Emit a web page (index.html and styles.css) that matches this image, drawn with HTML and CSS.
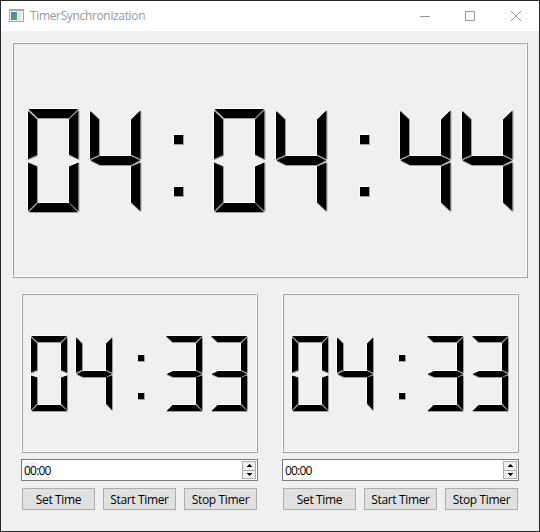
FILE: index.html
```html
<!DOCTYPE html>
<html lang="en">
<head>
<meta charset="utf-8">
<title>TimerSynchronization</title>
<link rel="stylesheet" href="styles.css">
</head>
<body>
<svg class="defs" width="0" height="0" aria-hidden="true">
  <defs>
    <path id="b0" d="M0.5 0H50L41 9H10ZM0 2L9 10.5V46L0 50ZM50.3 1.5V50L41 45.5V10.5ZM0 53.5L9 57.5V93.3L0 102ZM50.3 53.5V102L41 93.3V57.5ZM10 94H41L49.5 103H1Z"/>
    <path id="b4" d="M0 2L9 10.5V46L0 50ZM50.3 1.5V50L41 45.5V10.5ZM0.5 51.3L10 47H41L50 51.3L41 56H10ZM50.3 53.5V102L41 93.3V57.5Z"/>
    <path id="bc" d="M22 26H31V35H22ZM22 78H31V87H22Z"/>
    <path id="s0" d="M0 0H36L29.5 6H6.5ZM0 1.5L6 7.5V34L0 36.5ZM36 1.5V36.5L30 34V7.5ZM0 39.5L6 41.5V67.5L0 74ZM36 39.5V74L30 67.5V41.5ZM6.5 69H29.5L36 75H0.5Z"/>
    <path id="s4" d="M0 1.5L6 7.5V34L0 36.5ZM36 1.5V36.5L30 34V7.5ZM0.5 38L7 35H30L36 38L30 41H7ZM36 39.5V74L30 67.5V41.5Z"/>
    <path id="s3" d="M0 0H36L29.5 6H6.5ZM36 1.5V36.5L30 34V7.5ZM0.5 38L7 35H30L36 38L30 41H7ZM36 39.5V74L30 67.5V41.5ZM6.5 69H29.5L36 75H0.5Z"/>
    <path id="sc" d="M17 19H23V25H17ZM17 57H23V63H17Z"/>
    <g id="clock">
      <use href="#b0" x="14" y="65"/><use href="#b4" x="76" y="65"/><use href="#bc" x="138" y="65"/>
      <use href="#b0" x="200" y="65"/><use href="#b4" x="262" y="65"/><use href="#bc" x="324" y="65"/>
      <use href="#b4" x="386" y="65"/><use href="#b4" x="448" y="65"/>
    </g>
    <g id="timer">
      <use href="#s0" x="8" y="41"/><use href="#s4" x="53" y="41"/><use href="#sc" x="98" y="41"/>
      <use href="#s3" x="143" y="41"/><use href="#s3" x="188" y="41"/>
    </g>
  </defs>
</svg>
<div class="window">
  <header class="titlebar">
    <svg class="app-icon" width="16" height="14" viewBox="0 0 16 14">
      <defs><linearGradient id="pane" x1="0" y1="0" x2="1" y2="1"><stop offset="0" stop-color="#4f7fa5"/><stop offset="1" stop-color="#55a67c"/></linearGradient></defs>
      <path fill="#a4abae" d="M0 0H15V13H0Z"/><path fill="#f1f3f4" d="M1 2H14V12H1Z"/>
      <path fill="url(#pane)" d="M2 3H8V11H2Z"/><path fill="#d8e0e3" d="M9 3H11V11H9Z"/><path fill="#e4e9e6" d="M12 3H13V11H12Z"/>
    </svg>
    <h1 class="title"><span>TimerSynchronization</span></h1>
    <svg class="controls" width="104" height="12" viewBox="0 0 104 12" fill="none" stroke="#999">
      <path d="M0 6.5H10M45.5 1.5H54.5V10.5H45.5Z"/><path d="M91 1L101 11M101 1L91 11"/>
    </svg>
  </header>
  <main class="content">
    <div class="lcd lcd-main"><div class="lcd-inner">
      <svg width="512" height="232" viewBox="0 0 512 232"><use class="light" href="#clock" x="-1" y="-1"/><use class="dark" href="#clock" x="1"/><use class="dark" href="#clock" y="1"/><use class="dark" href="#clock" x="1" y="1"/><use href="#clock"/></svg>
    </div></div>
    <div class="timers">
      <section class="timer">
        <div class="lcd lcd-small"><div class="lcd-inner">
          <svg width="233" height="156" viewBox="0 0 233 156"><use class="light" href="#timer" x="-1" y="-1"/><use class="dark" href="#timer" x="1"/><use class="dark" href="#timer" y="1"/><use class="dark" href="#timer" x="1" y="1"/><use href="#timer"/></svg>
        </div></div>
        <div class="spin"><span class="value"><span class="section">00</span>:00</span>
          <span class="steps"><i><svg width="5" height="3"><path d="M2 0H3V1H4V2H5V3H0V2H1V1H2Z"/></svg></i><i><svg width="5" height="3"><path d="M0 0H5V1H4V2H3V3H2V2H1V1H0Z"/></svg></i></span>
        </div>
        <div class="buttons"><button><span>Set Time</span></button><button><span>Start Timer</span></button><button><span>Stop Timer</span></button></div>
      </section>
      <section class="timer">
        <div class="lcd lcd-small"><div class="lcd-inner">
          <svg width="233" height="156" viewBox="0 0 233 156"><use class="light" href="#timer" x="-1" y="-1"/><use class="dark" href="#timer" x="1"/><use class="dark" href="#timer" y="1"/><use class="dark" href="#timer" x="1" y="1"/><use href="#timer"/></svg>
        </div></div>
        <div class="spin"><span class="value">00:00</span>
          <span class="steps"><i><svg width="5" height="3"><path d="M2 0H3V1H4V2H5V3H0V2H1V1H2Z"/></svg></i><i><svg width="5" height="3"><path d="M0 0H5V1H4V2H3V3H2V2H1V1H0Z"/></svg></i></span>
        </div>
        <div class="buttons"><button><span>Set Time</span></button><button><span>Start Timer</span></button><button><span>Stop Timer</span></button></div>
      </section>
    </div>
  </main>
</div>
</body>
</html>
```
FILE: styles.css
```css
* { box-sizing: border-box; }
body { margin: 0; font: 12px/16px "Open Sans", "Noto Sans", sans-serif; color: #000; overflow: hidden; }
svg { display: block; }
.defs { height: 0; }
.window { width: 540px; height: 532px; border: 1px solid #2b292b; background: #f0f0f0; }
.titlebar { display: flex; align-items: center; height: 30px; padding: 0 16px 0 8px; background: #fff; }
.app-icon { margin-top: -1px; }
.title { flex: 1; margin: 0 0 0 5px; font-size: 12px; font-weight: 400; color: #999; letter-spacing: -0.35px; }
.controls { margin-right: -1px; margin-top: -1px; }
.content { padding: 11px; }
.lcd { border: 1px solid; border-color: #fff #a0a0a0 #a0a0a0 #fff; }
.lcd-inner { height: 100%; border: 1px solid; border-color: #a0a0a0 #fff #fff #a0a0a0; }
.lcd-main { width: 516px; height: 236px; }
.lcd-small { height: 160px; }
.light { fill: #fff; }
.dark { fill: #a0a0a0; }
.timers { display: flex; gap: 24px; margin: 15px 0 0 9px; }
.timer { width: 237px; }
.spin { display: flex; justify-content: space-between; height: 22px; margin-top: 6px; padding: 1px 1px 1px 2px; border: 1px solid #7a7a7a; background: #fff; }
.value { padding-top: 2px; letter-spacing: -0.8px; }
.section { background: #f0f0f0; }
.steps { display: flex; flex-direction: column; width: 14px; height: 18px; border: 1px solid #adadad; background: #f0f0f0; }
.steps i { display: flex; flex: 1; align-items: center; justify-content: center; }
.steps i + i { border-top: 1px solid #adadad; }
.buttons { display: flex; gap: 8px; margin: 7px 1px 0; }
button { width: 73px; height: 22px; padding: 0; border: 1px solid #adadad; background: #e1e1e1; color: #000; font: inherit; line-height: 20px; letter-spacing: -0.35px; white-space: nowrap; }
button span { position: relative; top: 1px; }
```
